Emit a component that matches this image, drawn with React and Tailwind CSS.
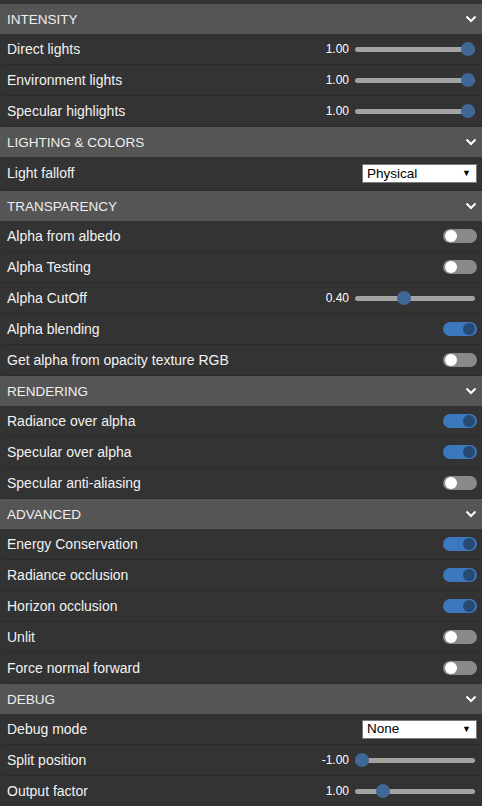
const sections = [
  {
    title: 'INTENSITY',
    rows: [
      { label: 'Direct lights', type: 'slider', value: '1.00', pos: 1 },
      { label: 'Environment lights', type: 'slider', value: '1.00', pos: 1 },
      { label: 'Specular highlights', type: 'slider', value: '1.00', pos: 1 },
    ],
  },
  {
    title: 'LIGHTING & COLORS',
    rows: [{ label: 'Light falloff', type: 'select', value: 'Physical', tall: true }],
  },
  {
    title: 'TRANSPARENCY',
    rows: [
      { label: 'Alpha from albedo', type: 'toggle', on: false },
      { label: 'Alpha Testing', type: 'toggle', on: false },
      { label: 'Alpha CutOff', type: 'slider', value: '0.40', pos: 0.4 },
      { label: 'Alpha blending', type: 'toggle', on: true },
      { label: 'Get alpha from opacity texture RGB', type: 'toggle', on: false },
    ],
  },
  {
    title: 'RENDERING',
    rows: [
      { label: 'Radiance over alpha', type: 'toggle', on: true },
      { label: 'Specular over alpha', type: 'toggle', on: true },
      { label: 'Specular anti-aliasing', type: 'toggle', on: false },
    ],
  },
  {
    title: 'ADVANCED',
    rows: [
      { label: 'Energy Conservation', type: 'toggle', on: true },
      { label: 'Radiance occlusion', type: 'toggle', on: true },
      { label: 'Horizon occlusion', type: 'toggle', on: true },
      { label: 'Unlit', type: 'toggle', on: false },
      { label: 'Force normal forward', type: 'toggle', on: false },
    ],
  },
  {
    title: 'DEBUG',
    rows: [
      { label: 'Debug mode', type: 'select', value: 'None' },
      { label: 'Split position', type: 'slider', value: '-1.00', pos: 0 },
      { label: 'Output factor', type: 'slider', value: '1.00', pos: 0.2 },
    ],
  },
]

function Chevron() {
  return (
    <svg width="12" height="8" viewBox="0 0 12 8" className="mr-[5px]">
      <polyline points="1.5,1.5 6,6 10.5,1.5" fill="none" stroke="#ffffff" strokeWidth="2" />
    </svg>
  )
}

function Slider({ value, pos }) {
  return (
    <div className="flex items-center pr-[7px]">
      <span className="text-[12px] text-white mr-[6px]">{value}</span>
      <div className="relative w-[120px] h-[14px] flex items-center">
        <div className="w-full h-[5px] rounded-full bg-[#a3a3a3]" />
        <div
          className="absolute top-0 w-[14px] h-[14px] rounded-full bg-[#3f6896]"
          style={{ left: `${pos * 106}px` }}
        />
      </div>
    </div>
  )
}

function Toggle({ on }) {
  return (
    <div className="pr-[5px]">
      {on ? (
        <div className="w-[34px] h-[14px] rounded-full bg-[#3b78bd] flex items-center justify-end pr-[2px]">
          <div className="w-[12px] h-[12px] rounded-full bg-[#254a73]" />
        </div>
      ) : (
        <div className="w-[34px] h-[14px] rounded-full bg-[#8a8a8a] flex items-center pl-[2px]">
          <div className="w-[12px] h-[12px] rounded-full bg-white" />
        </div>
      )}
    </div>
  )
}

function Select({ value }) {
  return (
    <div className="pr-[5px]">
      <div className="w-[115px] h-[19px] bg-white border border-[#7a7a7a] flex items-center justify-between pl-[4px] pr-[5px]">
        <span className="text-[13.5px] text-black leading-none">{value}</span>
        <span className="text-[9px] text-black leading-none">▼</span>
      </div>
    </div>
  )
}

function Row({ row }) {
  return (
    <div
      className={`ml-[2px] pl-[5px] flex items-center justify-between border-b border-[#2b2b2b] ${
        row.tall ? 'h-[34px]' : 'h-[31px]'
      }`}
    >
      <span className="text-[14px] text-[#f2f2f2]">{row.label}</span>
      {row.type === 'slider' && <Slider value={row.value} pos={row.pos} />}
      {row.type === 'toggle' && <Toggle on={row.on} />}
      {row.type === 'select' && <Select value={row.value} />}
    </div>
  )
}

export default function App() {
  return (
    <div
      className="w-[482px] h-[806px] overflow-hidden bg-[#333333] pt-[4px]"
      style={{ fontFamily: '"Liberation Sans", Arial, sans-serif' }}
    >
      {sections.map(section => (
        <div key={section.title}>
          <div className="h-[30px] bg-[#555555] flex items-center justify-between pl-[7px]">
            <span className="text-[13.5px] text-[#eeeeee] mt-[2px]">{section.title}</span>
            <Chevron />
          </div>
          {section.rows.map(row => (
            <Row key={row.label} row={row} />
          ))}
        </div>
      ))}
    </div>
  )
}
